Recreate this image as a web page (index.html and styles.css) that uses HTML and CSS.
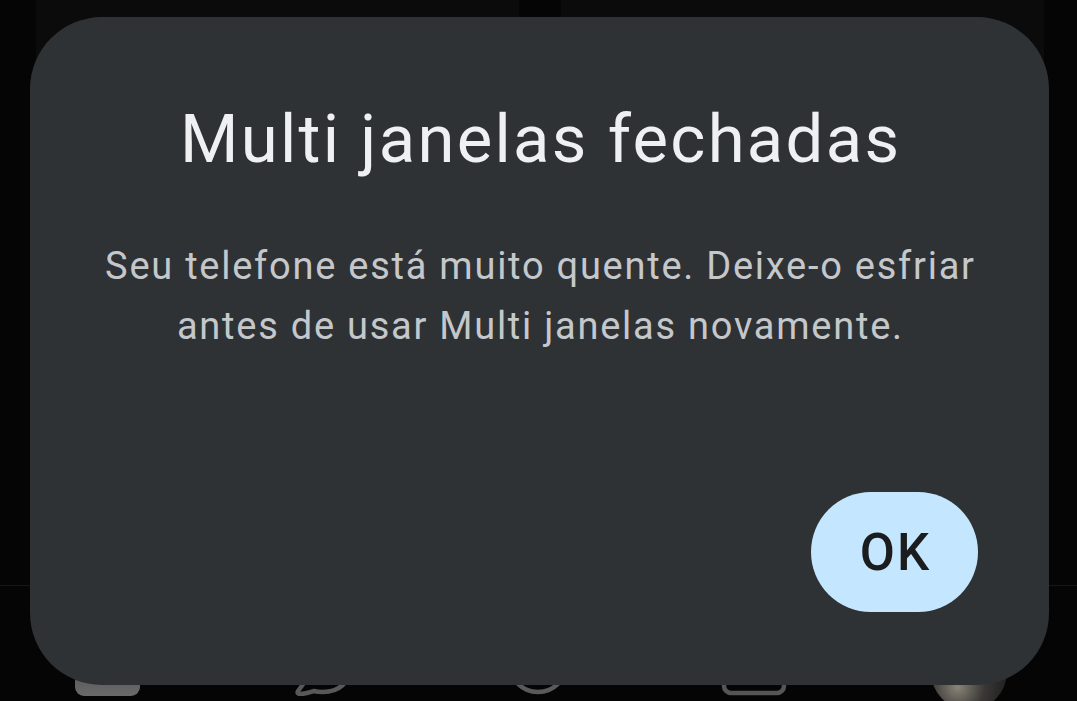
FILE: index.html
```html
<!DOCTYPE html>
<html lang="pt">
<head>
<meta charset="utf-8">
<title>Multi janelas fechadas</title>
<link rel="stylesheet" href="styles.css">
</head>
<body>
<div class="screen">
  <div class="panes">
    <div class="pane"></div>
    <div class="pane"></div>
  </div>
  <div class="navbar">
    <div class="nav-item">
      <svg width="65" height="60" viewBox="0 0 65 60"><defs><linearGradient id="g1" x1="0" y1="0" x2="0" y2="1"><stop offset="0" stop-color="#3f3f3f"/><stop offset="1" stop-color="#6a6a6a"/></linearGradient></defs><rect x="0" y="0" width="65" height="60" rx="9" fill="url(#g1)"/></svg>
    </div>
    <div class="nav-item">
      <svg width="62" height="60" viewBox="0 0 62 60"><path d="M31 4C15 4 4 14 4 28c0 8 3 14 8 19l-6 8c-1 2 0 3 2 3 6 0 11-2 14-3 3 1 6 1 9 1 16 0 27-10 27-24S47 4 31 4z" fill="none" stroke="#585858" stroke-width="4.5" stroke-linejoin="round"/></svg>
    </div>
    <div class="nav-item">
      <svg width="64" height="64" viewBox="0 0 64 64"><circle cx="32" cy="32" r="28" fill="none" stroke="#5a5a5a" stroke-width="4.5"/></svg>
    </div>
    <div class="nav-item">
      <svg width="66" height="60" viewBox="0 0 66 60"><rect x="3" y="3" width="60" height="54" rx="7" fill="none" stroke="#555" stroke-width="4.5"/></svg>
    </div>
    <div class="nav-item avatar-wrap">
      <svg width="76" height="76" viewBox="0 0 76 76"><defs><radialGradient id="g2" cx="0.35" cy="0.7" r="0.7"><stop offset="0" stop-color="#8a8478"/><stop offset="0.5" stop-color="#3a3836"/><stop offset="1" stop-color="#1c1c1c"/></radialGradient></defs><circle cx="38" cy="38" r="38" fill="url(#g2)"/></svg>
    </div>
  </div>

  <div class="dialog" role="dialog">
    <h1 class="dialog-title">Multi janelas fechadas</h1>
    <p class="dialog-text">Seu telefone está muito quente. Deixe-o esfriar antes de usar Multi janelas novamente.</p>
    <div class="dialog-actions">
      <button class="btn-ok">OK</button>
    </div>
  </div>
</div>
</body>
</html>
```

FILE: styles.css
```css
html, body {
  margin: 0;
  padding: 0;
  background: #050505;
}
.screen {
  position: relative;
  width: 1077px;
  height: 701px;
  overflow: hidden;
  display: flex;
  flex-direction: column;
  font-family: Roboto, "Noto Sans", sans-serif;
}
.panes {
  height: 585px;
  display: flex;
  gap: 42px;
  padding: 0 33px 0 36px;
}
.pane {
  flex: 1;
  background: #0b0b0b;
}
.navbar {
  flex: 1;
  border-top: 1px solid #171717;
  display: flex;
  justify-content: space-around;
  align-items: flex-end;
  padding-bottom: 5px;
}
.nav-item {
  display: flex;
  justify-content: center;
  width: 80px;
}
.nav-item svg { display: block; }
.avatar-wrap { margin-bottom: -14px; }

.dialog {
  position: absolute;
  left: 30px;
  top: 17px;
  width: 1019px;
  height: 668px;
  box-sizing: border-box;
  background: #2f3235;
  border-radius: 72px;
  padding: 82px 71px 73px;
  display: flex;
  flex-direction: column;
  align-items: center;
}
.dialog-title {
  margin: 0;
  font-size: 67px;
  line-height: 80px;
  font-weight: 400;
  letter-spacing: 2.3px;
  padding-left: 2.3px;
  color: #eff0f2;
  text-align: center;
  white-space: nowrap;
}
.dialog-text {
  margin: 57px 0 0;
  font-size: 38px;
  line-height: 60px;
  letter-spacing: 1.75px;
  padding-left: 1.75px;
  color: #c5c8cb;
  text-align: center;
  width: 900px;
  box-sizing: border-box;
}
.dialog-actions {
  margin-top: auto;
  align-self: stretch;
  display: flex;
  justify-content: flex-end;
}
.btn-ok {
  width: 167px;
  height: 120px;
  border: none;
  border-radius: 60px;
  background: #c4e7ff;
  color: #1a1c1e;
  font-family: Roboto, "Noto Sans", sans-serif;
  font-size: 51px;
  font-weight: 500;
  letter-spacing: 2px;
  padding: 0 0 0 2px;
}
```
